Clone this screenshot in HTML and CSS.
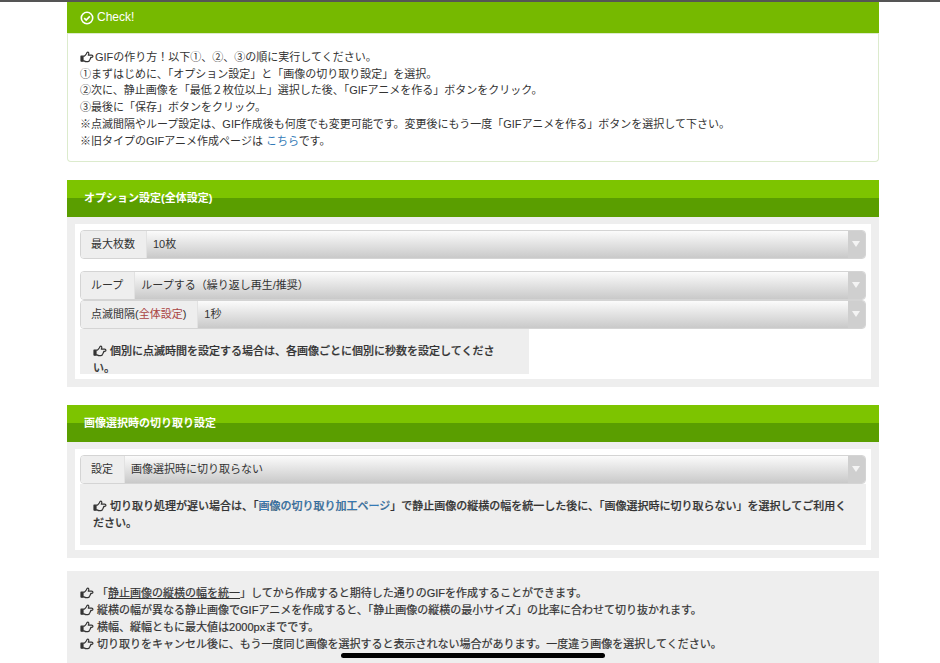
FILE: index.html
```html
<!DOCTYPE html>
<html lang="ja">
<head>
<meta charset="utf-8">
<title>GIF</title>
<link rel="stylesheet" href="styles.css">
</head>
<body>
<svg class="defs" width="0" height="0" aria-hidden="true">
  <symbol id="hand" viewBox="0 0 14 12">
    <path d="M1 5.2h3.2c.9-.5 1.7-1.4 2.2-2.4.3-.7.4-1.6 1.3-1.6.9 0 1.3.9 1 1.9l-.4 1.1h3.3c.7 0 1.3.5 1.3 1.1 0 .6-.5 1.1-1.2 1.1h-1c.2.7-.1 1.2-.6 1.5.1.7-.2 1.2-.7 1.4 0 .8-.6 1.3-1.4 1.3H6c-.8 0-1.3-.4-2-.7H1z" fill="none" stroke="currentColor" stroke-width="1.2" stroke-linejoin="round"/>
    <rect x="1" y="5.2" width="2.6" height="5.4" fill="currentColor"/>
  </symbol>
</svg>
<div class="topline"></div>
<main class="page">
  <section class="check">
    <h2 class="check-head">
      <svg class="check-icon" viewBox="0 0 14 14" aria-hidden="true"><circle cx="7" cy="7" r="5.7" fill="none" stroke="currentColor" stroke-width="1.6"/><path d="M4.2 7.1l2 2 3.6-3.7" fill="none" stroke="currentColor" stroke-width="1.6"/></svg>
      Check!
    </h2>
    <div class="check-body">
      <p><svg class="hand hand-tight"><use href="#hand"/></svg>GIFの作り方！以下①、②、③の順に実行してください。</p>
      <p>①まずはじめに、「オプション設定」と「画像の切り取り設定」を選択。</p>
      <p>②次に、静止画像を「最低２枚位以上」選択した後、「GIFアニメを作る」ボタンをクリック。</p>
      <p>③最後に「保存」ボタンをクリック。</p>
      <p>※点滅間隔やループ設定は、GIF作成後も何度でも変更可能です。変更後にもう一度「GIFアニメを作る」ボタンを選択して下さい。</p>
      <p>※旧タイプのGIFアニメ作成ページは <a href="#">こちら</a>です。</p>
    </div>
  </section>

  <section class="block">
    <h3 class="block-head">オプション設定(全体設定)</h3>
    <div class="block-body">
      <div class="block-inner">
        <div class="sel sel-gap"><span class="sel-label">最大枚数</span><span class="sel-value">10枚</span><span class="sel-arrow"></span></div>
        <div class="sel"><span class="sel-label">ループ</span><span class="sel-value">ループする（繰り返し再生/推奨）</span><span class="sel-arrow"></span></div>
        <div class="sel"><span class="sel-label">点滅間隔(<span class="red">全体設定</span>)</span><span class="sel-value">1秒</span><span class="sel-arrow"></span></div>
        <div class="note note-narrow"><svg class="hand"><use href="#hand"/></svg> 個別に点滅時間を設定する場合は、各画像ごとに個別に秒数を設定してください。</div>
      </div>
    </div>
  </section>

  <section class="block">
    <h3 class="block-head">画像選択時の切り取り設定</h3>
    <div class="block-body">
      <div class="block-inner">
        <div class="sel"><span class="sel-label">設定</span><span class="sel-value">画像選択時に切り取らない</span><span class="sel-arrow"></span></div>
        <div class="note"><svg class="hand"><use href="#hand"/></svg> 切り取り処理が遅い場合は、「<a href="#">画像の切り取り加工ページ</a>」で静止画像の縦横の幅を統一した後に、「画像選択時に切り取らない」を選択してご利用ください。</div>
      </div>
    </div>
  </section>

  <section class="tips">
    <p><svg class="hand"><use href="#hand"/></svg> 「<u>静止画像の縦横の幅を統一</u>」してから作成すると期待した通りのGIFを作成することができます。</p>
    <p><svg class="hand"><use href="#hand"/></svg> 縦横の幅が異なる静止画像でGIFアニメを作成すると、「静止画像の縦横の最小サイズ」の比率に合わせて切り抜かれます。</p>
    <p><svg class="hand"><use href="#hand"/></svg> 横幅、縦幅ともに最大値は2000pxまでです。</p>
    <p><svg class="hand"><use href="#hand"/></svg> 切り取りをキャンセル後に、もう一度同じ画像を選択すると表示されない場合があります。一度違う画像を選択してください。</p>
  </section>
</main>
<div class="home-bar"></div>
</body>
</html>
```

FILE: styles.css
```css
* { box-sizing: border-box; }
html, body { height: 663px; overflow: hidden; }
body {
  margin: 0;
  background: #fff;
  color: #333;
  font-family: "Liberation Sans", "Noto Sans CJK JP", sans-serif;
  font-size: 11px;
  line-height: 16.7px;
}
.defs { position: absolute; }
p { margin: 0; }
a { color: #337ab7; text-decoration: none; }
.topline { height: 2px; background: #555; }
.page { width: 812px; margin: 0 auto 0 67px; }

.check { height: 160px; border: 1px solid #dcebcd; border-top: 0; border-radius: 0 0 4px 4px; }
.check-head {
  display: flex;
  align-items: center;
  gap: 3px;
  height: 32px;
  margin: 0 -1px;
  padding: 0 13px;
  background: #76b900;
  color: #fff;
  font-size: 12px;
  font-weight: 400;
  border-bottom: 1px solid #dcebcd;
}
.check-icon { width: 14px; height: 14px; }
.check-body { padding: 15px 12px; }

.block { margin-top: 18px; }
.block-head {
  height: 37px;
  margin: 0;
  padding: 10px 17px 0;
  background: linear-gradient(#7dc400 0, #7dc400 18px, #5a9e00 18px, #5a9e00 100%);
  color: #fff;
  font-size: 11px;
  line-height: 17px;
  font-weight: 700;
}
.block-body { padding: 7px 8px 8px; background: #eee; }
.block-inner { padding: 6px 5px 5px; background: #fff; }
.sel {
  display: flex;
  height: 29px;
  border: 1px solid #d4d4d4;
  border-radius: 4px;
  overflow: hidden;
  line-height: 26px;
}
.sel-gap { margin-bottom: 12px; }
.sel-label {
  padding: 0 11px 0 10px;
  background: #eee;
  border-right: 1px solid #e2e2e2;
  white-space: nowrap;
}
.sel-value {
  flex: 1;
  padding: 0 6px;
  background: linear-gradient(#fbfbfb, #c9c9c9);
}
.sel-arrow {
  position: relative;
  width: 17px;
  background: #cfcfcf;
}
.sel-arrow::after {
  content: "";
  position: absolute;
  left: 4px;
  top: 10px;
  border: 4px solid transparent;
  border-top: 6px solid #f4f4f4;
  border-bottom: 0;
}
.red { color: #a94442; }
.note {
  padding: 14px 13px 14px;
  background: #eee;
  font-weight: 500;
  -webkit-text-stroke: 0.2px #333;
}
.note-narrow { width: 449px; height: 45px; }
.hand { width: 14px; height: 12px; vertical-align: -2px; }
.hand-tight { margin-right: 1px; }

.tips {
  height: 95px;
  margin-top: 13px;
  padding: 14px 13px;
  background: #eee;
  -webkit-text-stroke: 0.2px #333;
}

.home-bar {
  position: absolute;
  left: 341px;
  top: 653px;
  width: 264px;
  height: 5px;
  border-radius: 3px;
  background: #000;
}
```
